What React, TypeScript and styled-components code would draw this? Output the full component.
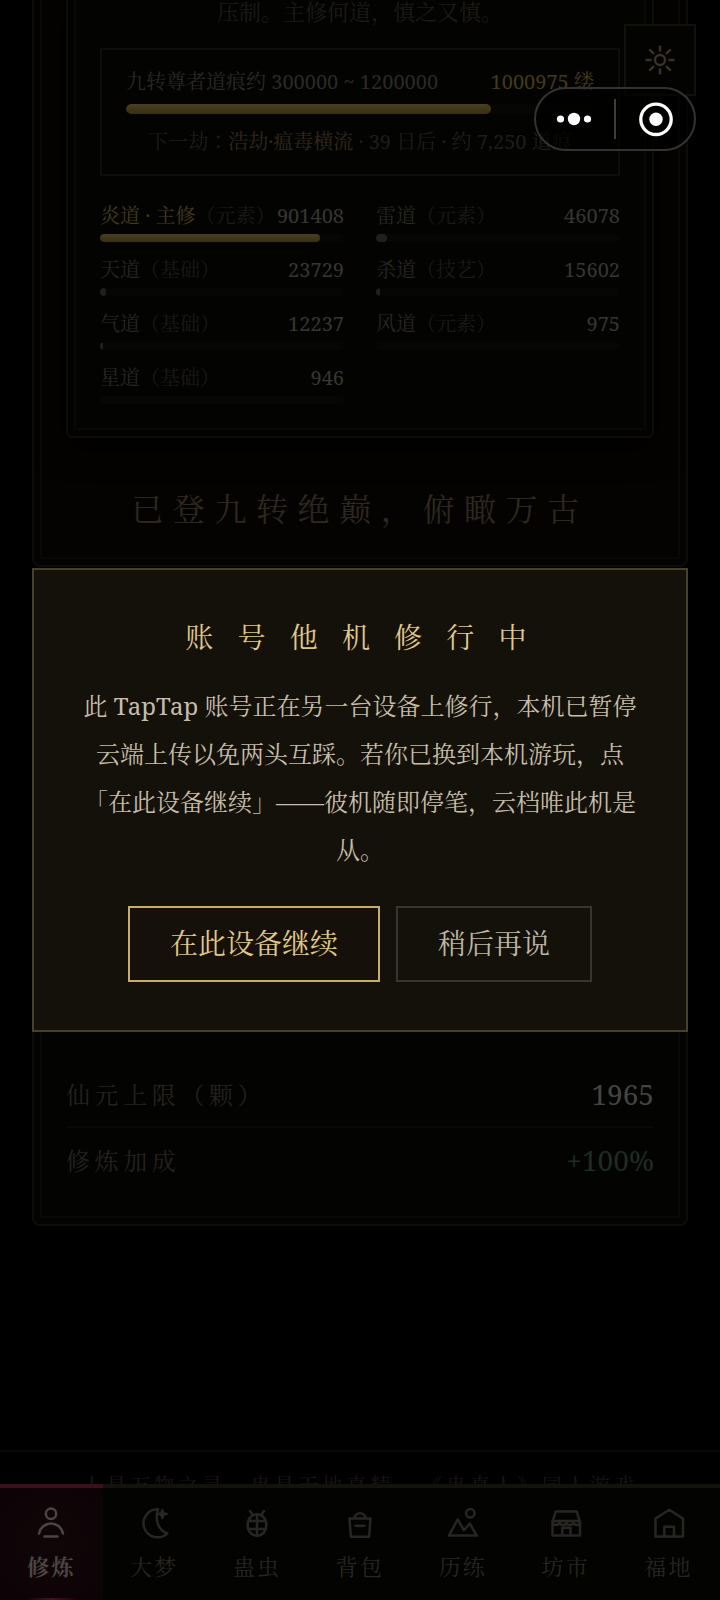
import React from 'react';
import styled, { createGlobalStyle, css } from 'styled-components';

const GlobalStyle = createGlobalStyle`
  * { box-sizing: border-box; }
  html, body { margin: 0; padding: 0; background: #000; }
  body {
    font-family: "Noto Serif", "Noto Serif CJK SC", "Noto Sans CJK SC", serif;
    font-weight: 400;
    color: #24231f;
  }
  button { font: inherit; color: inherit; }
`;

const Screen = styled.main`
  width: 720px;
  height: 1600px;
  padding: 0 32px;
  overflow: hidden;
  position: relative;
  background: #000;
`;

const framed = css`
  position: relative;
  border: 2px solid #0d0c09;
  &::after {
    content: '';
    position: absolute;
    inset: 6px;
    border: 2px solid #090806;
    pointer-events: none;
  }
`;

const RealmPanel = styled.section`
  ${framed}
  border-top: 0;
  border-radius: 0 0 8px 8px;
  padding: 0 32px 32px;
  background: #040301;
  &::after { top: 0; border-top: 0; }
`;

const PathPanel = styled.section`
  ${framed}
  border-top: 0;
  border-radius: 0 0 6px 6px;
  padding: 0 32px 32px;
  background: #030302;
  box-shadow: 0 8px 32px #000;
  &::after { top: 0; border-top: 0; }
`;

const Note = styled.p`
  margin: 0;
  padding-bottom: 2px;
  font-size: 22px;
  line-height: 22px;
  text-align: center;
  color: #1c1b18;
`;

const MarkBox = styled.div`
  margin-top: 24px;
  height: 128px;
  border: 2px solid #0e0d0a;
  padding: 18px 24px;
  font-size: 20px;
  line-height: 28px;
`;

const SplitRow = styled.div`
  display: flex;
  justify-content: space-between;
  white-space: nowrap;
`;

const Range = styled.span`
  color: #2b2a26;
`;

const Gold = styled.span`
  color: #433a1b;
`;

const Track = styled.div<{ $height: number; $gap: number }>`
  height: ${(p) => p.$height}px;
  margin-top: ${(p) => p.$gap}px;
  border-radius: ${(p) => p.$height / 2}px;
  background: #060605;
  overflow: hidden;
`;

const Fill = styled.div<{ $main?: boolean }>`
  height: 100%;
  border-radius: 5px;
  background: ${(p) => (p.$main ? 'linear-gradient(#494021, #40371a 50%, #383012)' : '#20201e')};
`;

const NextTrial = styled.p`
  margin: 14px 0 0;
  text-align: center;
  white-space: nowrap;
  color: #1f1e1a;
  b { font-weight: 400; color: #30291d; }
`;

const Colon = styled.span`
  font-family: "Noto Serif CJK JP", "Noto Sans CJK JP", serif;
  line-height: 1;
`;

const PathGrid = styled.div`
  display: grid;
  grid-template-columns: 1fr 1fr;
  gap: 14px 32px;
  margin-top: 26px;
  font-size: 20px;
  line-height: 28px;
`;

const PathName = styled.span<{ $main?: boolean }>`
  color: ${(p) => (p.$main ? '#433a1b' : '#282723')};
`;

const PathKind = styled.span`
  color: #1b1a17;
`;

const PathValue = styled.span`
  color: #373633;
`;

const Summit = styled.h2`
  margin: 47px 0 0;
  font-size: 32px;
  line-height: 48px;
  font-weight: 400;
  letter-spacing: 9.6px;
  text-align: center;
  white-space: nowrap;
  color: #2d281d;
`;

const StatPanel = styled.section`
  ${framed}
  display: flex;
  flex-direction: column;
  justify-content: flex-end;
  margin-top: 33px;
  height: 626px;
  padding: 0 32px 30px;
  border-radius: 8px;
  background: #030301;
  box-shadow: 0 8px 32px #000;
`;

const StatRow = styled.div`
  display: flex;
  justify-content: space-between;
  align-items: center;
  height: 66px;
  padding-bottom: 3px;
  &:not(:last-child) {
    padding-bottom: 1px;
    border-bottom: 2px solid #080806;
  }
`;

const StatLabel = styled.span`
  font-size: 24px;
  letter-spacing: 4.6px;
  color: #23221f;
`;

const StatValue = styled.span<{ $bonus?: boolean }>`
  font-size: 28px;
  color: ${(p) => (p.$bonus ? '#1f2b26' : '#454441')};
`;

const Footer = styled.footer`
  margin: 224px -32px 0;
  padding-top: 20px;
  border-top: 2px solid #090909;
  font-size: 20px;
  line-height: 28px;
  letter-spacing: 4px;
  text-align: center;
  white-space: nowrap;
  color: #191816;
`;

const TabBar = styled.nav`
  position: absolute;
  left: 0;
  right: 0;
  bottom: 0;
  display: grid;
  grid-template-columns: repeat(7, 1fr);
  height: 116px;
  background: #030301;
`;

const Tab = styled.div<{ $active?: boolean }>`
  display: flex;
  flex-direction: column;
  align-items: center;
  gap: 13px;
  padding-top: 19px;
  border-top: 4px solid ${(p) => (p.$active ? '#3c101a' : '#13120b')};
  background: ${(p) => (p.$active ? 'radial-gradient(circle at 50% 50%, #100507, #0d0306)' : 'none')};
  color: ${(p) => (p.$active ? '#4b4544' : '#272623')};
  position: relative;
  ${(p) =>
    p.$active &&
    css`
      &::after {
        content: '';
        position: absolute;
        left: 24%;
        right: 24%;
        bottom: 0;
        height: 2px;
        background: linear-gradient(90deg, transparent, #4a1022, transparent);
      }
    `}
`;

const TabIcon = styled.svg`
  width: 32px;
  height: 32px;
  fill: none;
  stroke: currentColor;
  stroke-width: 2.5;
  stroke-linecap: round;
  stroke-linejoin: round;
`;

const TabLabel = styled.span<{ $active?: boolean }>`
  font-size: 22px;
  line-height: 28px;
  letter-spacing: 2.2px;
  font-weight: ${(p) => (p.$active ? 700 : 400)};
`;

const SettingsButton = styled.div`
  position: absolute;
  left: 624px;
  top: 24px;
  width: 72px;
  height: 72px;
  display: flex;
  align-items: center;
  justify-content: center;
  border: 2px solid #13110b;
  background: #030302;
  color: #3a3226;
  svg { width: 32px; height: 32px; fill: none; stroke: currentColor; stroke-width: 2.4; }
`;

const Capsule = styled.div`
  position: absolute;
  left: 534px;
  top: 87px;
  width: 162px;
  height: 64px;
  display: flex;
  align-items: center;
  border: 2px solid #333;
  border-radius: 32px;
  background: rgba(0, 0, 0, 0.6);
`;

const CapsuleHalf = styled.div<{ $width: number }>`
  flex: 0 0 ${(p) => p.$width}px;
  display: flex;
  align-items: center;
  justify-content: center;
  svg { display: block; fill: #fff; }
`;

const CapsuleRule = styled.i`
  flex: 0 0 2px;
  margin-left: 2px;
  height: 40px;
  background: #3d3d3d;
`;

const Overlay = styled.div`
  position: absolute;
  inset: 0;
  display: flex;
  align-items: center;
  justify-content: center;
`;

const Dialog = styled.div`
  width: 656px;
  padding: 47px 48px 48px;
  border: 2px solid #46412c;
  background: #14110b;
  text-align: center;
`;

const DialogTitle = styled.h1`
  margin: 0 0 25px;
  font-size: 28px;
  line-height: 40px;
  font-weight: 400;
  letter-spacing: 24.2px;
  text-indent: 16px;
  white-space: nowrap;
  color: #e0c88d;
`;

const DialogText = styled.p`
  margin: 0 0 32px;
  font-size: 24px;
  line-height: 48px;
  color: #c6beaa;
`;

const Line = styled.span`
  display: block;
  white-space: nowrap;
`;

const Actions = styled.div`
  display: flex;
  justify-content: center;
  gap: 16px;
`;

const Action = styled.button<{ $primary?: boolean }>`
  height: 76px;
  padding: 0 40px 2px;
  border: 2px solid ${(p) => (p.$primary ? '#c8ac6a' : '#38352d')};
  border-radius: 0;
  background: ${(p) => (p.$primary ? '#15110a' : 'transparent')};
  color: ${(p) => (p.$primary ? '#e0c88d' : '#bdb6a5')};
  font-size: 28px;
  line-height: 40px;
  white-space: nowrap;
`;

const paths = [
  { name: '炎道 · 主修', kind: '元素', value: 901408, main: true },
  { name: '雷道', kind: '元素', value: 46078 },
  { name: '天道', kind: '基础', value: 23729 },
  { name: '杀道', kind: '技艺', value: 15602 },
  { name: '气道', kind: '基础', value: 12237 },
  { name: '风道', kind: '元素', value: 975 },
  { name: '星道', kind: '基础', value: 946 },
];
const pathTotal = 1000975;

const tabs = [
  {
    label: '修炼',
    icon: (
      <>
        <circle cx="16" cy="6.7" r="5.2" />
        <path d="M4 26.6c1.2-6 6-10.1 12-10.1s10.8 4.1 12 10.1M9.5 29.5h13" />
      </>
    ),
  },
  {
    label: '大梦',
    icon: (
      <>
        <path d="M20 2.3A14 14 0 1 0 29.3 26.3C20.5 23.5 16.5 13 20 2.3Z" />
        <path
          d="M24.3 2.5l1.3 3.3 3.6 1.1-3.6 1.2-1.3 3.5-1.3-3.5-3-1.2 3-1.1z"
          fill="currentColor"
          strokeWidth="1.8"
        />
      </>
    ),
  },
  {
    label: '蛊虫',
    icon: (
      <>
        <ellipse cx="16" cy="18" rx="9.4" ry="10.8" />
        <path d="M16 7.5v21M8 14h16M8 22h16M12 8.3L9 4M20 8.3L23 4" />
      </>
    ),
  },
  {
    label: '背包',
    icon: <path d="M5.5 11.5h21l-1.4 18.2H6.9zM10.8 11c0-6.5 10.4-6.5 10.4 0M11.5 18.8h9" />,
  },
  {
    label: '历练',
    icon: (
      <>
        <path d="M2 28.6L10.6 12.5 17 23.3 22.8 16.5 29.8 28.6Z" />
        <circle cx="23.3" cy="6.3" r="4.3" />
      </>
    ),
  },
  {
    label: '坊市',
    icon: (
      <path d="M5.7 4.4h21l3.3 10.6v13.4H2.5V15zM2.5 14h27.5M2.5 15.5c1 3.3 6.3 3.3 7 0 1 3.3 6 3.3 6.9 0 1 3.3 6 3.3 6.9 0 1 3.3 5.7 3.3 6.7 0M12.3 28.4v-7.6h8.2v7.6" />
    ),
  },
  {
    label: '福地',
    icon: <path d="M2.5 11.6L16.2 2.8 30 11.6v18H2.5zM11.3 29.6v-9.8h9.7v9.8" />,
  },
];

export default function App() {
  return (
    <Screen>
      <GlobalStyle />
      <RealmPanel>
        <PathPanel>
          <Note>压制。主修何道，慎之又慎。</Note>
          <MarkBox>
            <SplitRow>
              <Range>九转尊者道痕约 300000 ~ 1200000</Range>
              <Gold>1000975 缕</Gold>
            </SplitRow>
            <Track $height={10} $gap={8}>
              <Fill $main style={{ width: '77.9%' }} />
            </Track>
            <NextTrial>
              下一劫<Colon>：</Colon>
              <b>浩劫·瘟毒横流</b> · 39 日后 · 约 7,250 道痕
            </NextTrial>
          </MarkBox>
          <PathGrid>
            {paths.map((p) => {
              const share = (p.value / pathTotal) * 100;
              return (
                <div key={p.name}>
                  <SplitRow>
                    <span>
                      <PathName $main={p.main}>{p.name}</PathName>
                      <PathKind>（{p.kind}）</PathKind>
                    </span>
                    <PathValue>{p.value}</PathValue>
                  </SplitRow>
                  <Track $height={8} $gap={4}>
                    {share > 0.5 && <Fill $main={p.main} style={{ width: `${share}%` }} />}
                  </Track>
                </div>
              );
            })}
          </PathGrid>
        </PathPanel>
        <Summit>已登九转绝巅，俯瞰万古</Summit>
      </RealmPanel>

      <StatPanel>
        <StatRow>
          <StatLabel>仙元上限（颗）</StatLabel>
          <StatValue>1965</StatValue>
        </StatRow>
        <StatRow>
          <StatLabel>修炼加成</StatLabel>
          <StatValue $bonus>+100%</StatValue>
        </StatRow>
      </StatPanel>

      <Footer>人是万物之灵，蛊是天地真精 · 《蛊真人》同人游戏</Footer>

      <TabBar>
        {tabs.map((t, i) => (
          <Tab key={t.label} $active={i === 0}>
            <TabIcon viewBox="0 0 32 32">{t.icon}</TabIcon>
            <TabLabel $active={i === 0}>{t.label}</TabLabel>
          </Tab>
        ))}
      </TabBar>

      <SettingsButton>
        <svg viewBox="0 0 32 32">
          <circle cx="16" cy="16" r="5" />
          <path d="M16 1.5v6M16 24.5v6M1.5 16h6M24.5 16h6M5.4 5.4l4.5 4.5M22.1 22.1l4.5 4.5M26.6 5.4l-4.5 4.5M9.9 22.1l-4.5 4.5" />
        </svg>
      </SettingsButton>

      <Overlay>
        <Dialog role="dialog">
          <DialogTitle>账号他机修行中</DialogTitle>
          <DialogText>
            <Line>此 TapTap 账号正在另一台设备上修行，本机已暂停</Line>
            <Line>云端上传以免两头互踩。若你已换到本机游玩，点</Line>
            <Line>「在此设备继续」——彼机随即停笔，云档唯此机是</Line>
            <Line>从。</Line>
          </DialogText>
          <Actions>
            <Action $primary>在此设备继续</Action>
            <Action>稍后再说</Action>
          </Actions>
        </Dialog>
      </Overlay>

      <Capsule>
        <CapsuleHalf $width={76}>
          <svg width="36" height="14" viewBox="0 0 36 14">
            <circle cx="4.5" cy="7" r="3.6" />
            <circle cx="18" cy="7" r="6.2" />
            <circle cx="31.5" cy="7" r="3.6" />
          </svg>
        </CapsuleHalf>
        <CapsuleRule />
        <CapsuleHalf $width={80}>
          <svg width="36" height="36" viewBox="0 0 36 36">
            <circle cx="18" cy="18.3" r="15.2" fill="none" stroke="#fff" strokeWidth="3.3" />
            <circle cx="18" cy="18.3" r="6.7" />
          </svg>
        </CapsuleHalf>
      </Capsule>
    </Screen>
  );
}
